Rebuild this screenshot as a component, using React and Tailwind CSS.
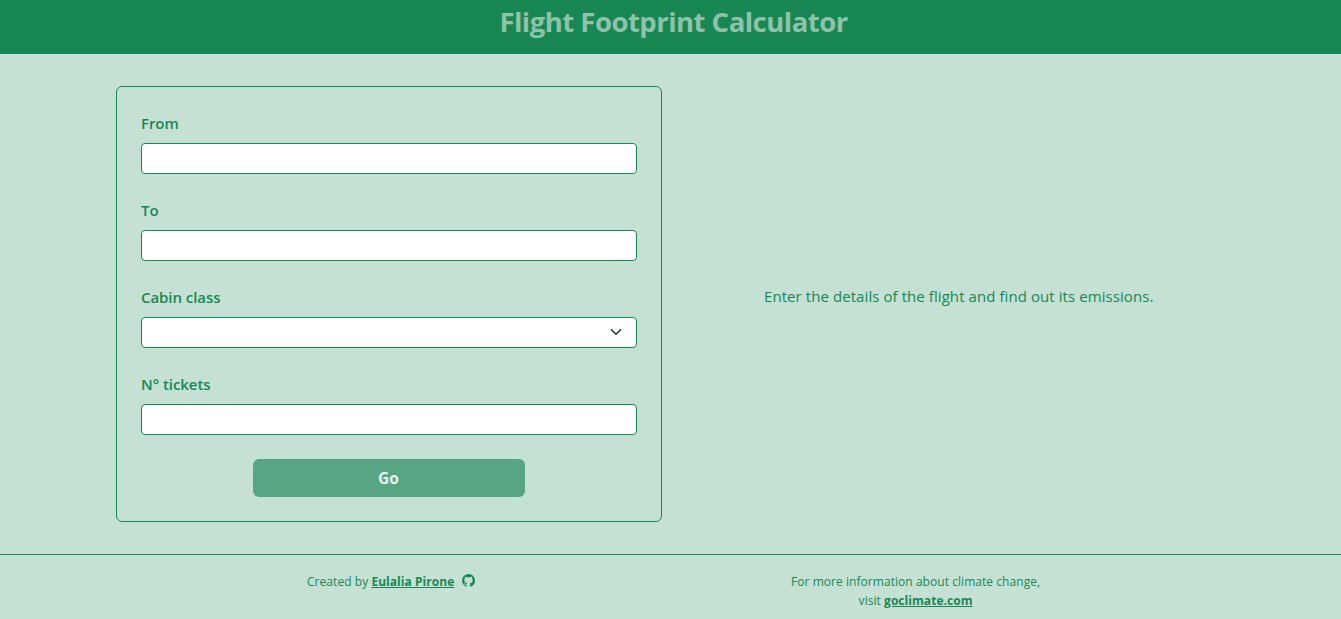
import { VscGithubInverted } from "react-icons/vsc";

function Field({ id, label, children }) {
  return (
    <div className="mb-6">
      <label htmlFor={id} className="mb-2 block h-6 text-[15px] leading-6 font-semibold tracking-[-0.06px]">{label}</label>
      {children || <input id={id} className="block h-[31px] w-full rounded-[4px] border border-[#198754] bg-white px-2 text-sm outline-none" />}
    </div>
  );
}

export default function App() {
  return (
    <div className="flex h-[619px] flex-col overflow-hidden bg-[#c5e1d4] font-['Open_Sans','Noto_Sans',sans-serif] text-[#198754]">
      <header className="h-[54px] bg-[#198754] pl-[6px] text-center">
        <h1 className="pt-[5px] text-[27.5px] leading-[34px] font-bold tracking-[-0.52px] text-[#8cc3a9]">Flight Footprint Calculator</h1>
      </header>
      <main className="flex h-[500px] pt-8 pl-[116px]">
        <form className="h-[436px] w-[546px] rounded-[6px] border border-[#198754] px-6 pt-6">
          <Field id="from" label="From" />
          <Field id="to" label="To" />
          <Field id="cabin" label="Cabin class">
            <div className="flex h-[31px] items-center justify-end rounded-[4px] border border-[#198754] bg-white pr-3 pb-0.5">
              <svg className="h-3 w-4" viewBox="0 0 16 16" fill="none" stroke="#343a40" strokeWidth="2.3" strokeLinecap="round" strokeLinejoin="round"><path d="m2 5 6 6 6-6" /></svg>
            </div>
          </Field>
          <Field id="tickets" label="N° tickets" />
          <button type="button" className="mx-auto block h-[38px] w-[272px] rounded-[6px] bg-[#57a582] pt-0.5 pr-px text-[15.5px] font-bold text-[#e7f3ee]">Go</button>
        </form>
        <p className="mt-[198px] ml-[102px] text-[15px] leading-6 tracking-[0.075px] whitespace-nowrap">Enter the details of the flight and find out its emissions.</p>
      </main>
      <footer className="flex h-[65px] border-t border-[#198754] pt-[17px] pl-[307px] text-[12px] leading-[19px] tracking-[0.05px]">
        <div className="flex h-5 w-[484px]">
          <span>Created by <a className="font-bold underline">Eulalia Pirone</a></span>
          <VscGithubInverted className="mt-[2px] ml-2 h-[13px] w-[13px]" />
        </div>
        <p className="text-center whitespace-nowrap">For more information about climate change,<br />visit <a className="font-bold underline">goclimate.com</a></p>
      </footer>
    </div>
  );
}
